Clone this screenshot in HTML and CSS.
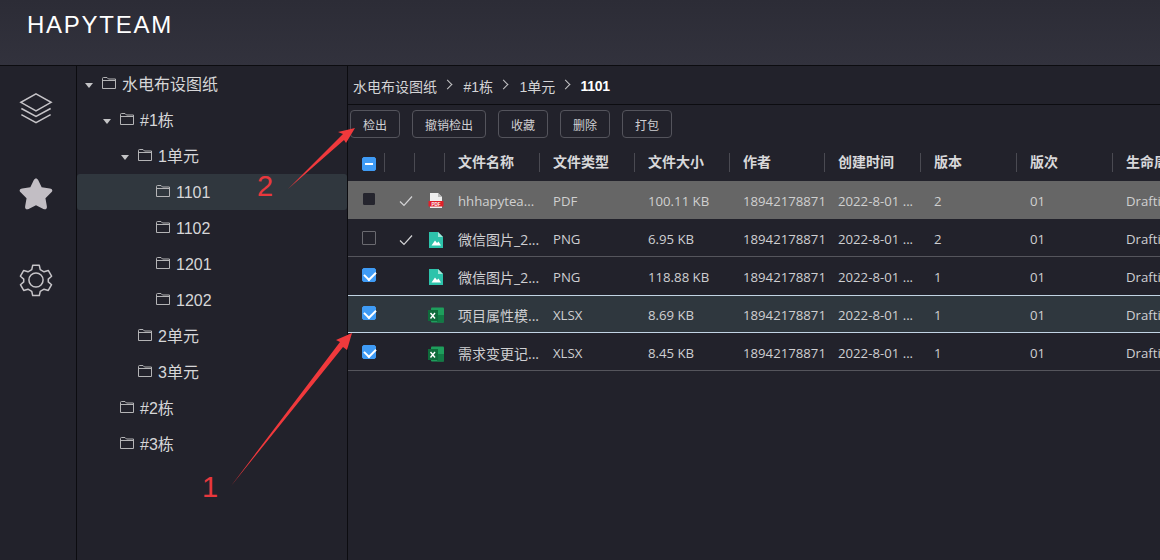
FILE: index.html
```html
<!DOCTYPE html>
<html lang="en">
<head>
  <title>HAPYTEAM</title>
  <meta charset="UTF-8">
  <link rel="stylesheet" href="styles.css">
</head>
<body>

  <header class="topbar">HAPYTEAM</header>

  <div class="layout">
    <nav class="rail">
      <svg class="rail-icon" width="34" height="34" viewBox="0 0 36 36">
        <path d="M18 3 L34 12 L18 21 L2 12 Z M2.500 18.500 L18 27 L33.500 18.500 M2.500 25 L18 33.500 L33.500 25" />
      </svg>
      <svg class="rail-icon rail-star" width="34" height="34" viewBox="0 0 36 36">
        <path d="M18 1.500 C19 1.500 19.800 2.200 20.300 3.300 L24 10.800 L32.700 12.100 C35.500 12.500 36 14.500 34.300 16.200 L28 22.400 L29.500 31 C30 33.800 28 35 25.800 33.800 L18 29.800 L10.200 33.800 C8 35 6 33.800 6.500 31 L8 22.400 L1.700 16.200 C0 14.500 0.500 12.500 3.300 12.100 L12 10.800 L15.700 3.300 C16.200 2.200 17 1.500 18 1.500 Z" />
      </svg>
      <svg class="rail-icon" width="34" height="34" viewBox="0 0 36 36">
        <circle cx="18" cy="18" r="7.500" />
        <path d="M14.500 2.500 H21.500 L22.500 7 L26.500 9.300 L31 7.900 L34.500 14 L31 17 V20 L34.500 23 L31 29.100 L26.500 27.700 L22.500 30 L21.500 34.500 H14.500 L13.500 30 L9.500 27.700 L5 29.100 L1.500 23 L5 20 V17 L1.500 14 L5 7.900 L9.500 9.300 L13.500 7 Z" stroke-linejoin="round" />
      </svg>
    </nav>

    <aside class="tree">
      <div class="node lv0"><i class="caret"></i><svg class="folder" viewBox="0 0 14 12"><path d="M.5 1.500 Q.5 .5 1.500 .5 H5 L6.500 2 H13.500 V11.500 H.5 Z M.5 3.500 H13.500" /></svg>水电布设图纸</div>
      <div class="node lv1"><i class="caret"></i><svg class="folder" viewBox="0 0 14 12"><path d="M.5 1.500 Q.5 .5 1.500 .5 H5 L6.500 2 H13.500 V11.500 H.5 Z M.5 3.500 H13.500" /></svg>#1栋</div>
      <div class="node lv2"><i class="caret"></i><svg class="folder" viewBox="0 0 14 12"><path d="M.5 1.500 Q.5 .5 1.500 .5 H5 L6.500 2 H13.500 V11.500 H.5 Z M.5 3.500 H13.500" /></svg>1单元</div>
      <div class="node lv3 active"><svg class="folder" viewBox="0 0 14 12"><path d="M.5 1.500 Q.5 .5 1.500 .5 H5 L6.500 2 H13.500 V11.500 H.5 Z M.5 3.500 H13.500" /></svg>1101</div>
      <div class="node lv3"><svg class="folder" viewBox="0 0 14 12"><path d="M.5 1.500 Q.5 .5 1.500 .5 H5 L6.500 2 H13.500 V11.500 H.5 Z M.5 3.500 H13.500" /></svg>1102</div>
      <div class="node lv3"><svg class="folder" viewBox="0 0 14 12"><path d="M.5 1.500 Q.5 .5 1.500 .5 H5 L6.500 2 H13.500 V11.500 H.5 Z M.5 3.500 H13.500" /></svg>1201</div>
      <div class="node lv3"><svg class="folder" viewBox="0 0 14 12"><path d="M.5 1.500 Q.5 .5 1.500 .5 H5 L6.500 2 H13.500 V11.500 H.5 Z M.5 3.500 H13.500" /></svg>1202</div>
      <div class="node lv2 leaf"><svg class="folder" viewBox="0 0 14 12"><path d="M.5 1.500 Q.5 .5 1.500 .5 H5 L6.500 2 H13.500 V11.500 H.5 Z M.5 3.500 H13.500" /></svg>2单元</div>
      <div class="node lv2 leaf"><svg class="folder" viewBox="0 0 14 12"><path d="M.5 1.500 Q.5 .5 1.500 .5 H5 L6.500 2 H13.500 V11.500 H.5 Z M.5 3.500 H13.500" /></svg>3单元</div>
      <div class="node lv1 leaf"><svg class="folder" viewBox="0 0 14 12"><path d="M.5 1.500 Q.5 .5 1.500 .5 H5 L6.500 2 H13.500 V11.500 H.5 Z M.5 3.500 H13.500" /></svg>#2栋</div>
      <div class="node lv1 leaf"><svg class="folder" viewBox="0 0 14 12"><path d="M.5 1.500 Q.5 .5 1.500 .5 H5 L6.500 2 H13.500 V11.500 H.5 Z M.5 3.500 H13.500" /></svg>#3栋</div>
    </aside>

    <main class="main">
      <div class="crumbs">
        <span>水电布设图纸</span><i class="sep"></i>
        <span>#1栋</span><i class="sep"></i>
        <span>1单元</span><i class="sep"></i>
        <span class="current">1101</span>
      </div>

      <div class="toolbar">
        <button>检出</button>
        <button>撤销检出</button>
        <button>收藏</button>
        <button>删除</button>
        <button>打包</button>
      </div>

      <table class="files">
        <colgroup>
          <col class="c-check"><col class="c-mark"><col class="c-mark">
          <col class="c-text"><col class="c-text"><col class="c-text"><col class="c-text">
          <col class="c-wide"><col class="c-wide"><col class="c-wide"><col class="c-wide">
        </colgroup>
        <thead>
          <tr>
            <th class="pick"><span class="box partial"></span></th>
            <th></th><th></th>
            <th>文件名称</th><th>文件类型</th><th>文件大小</th><th>作者</th>
            <th>创建时间</th><th>版本</th><th>版次</th><th>生命周期状态</th>
          </tr>
        </thead>
        <tbody>
          <tr class="hovered">
            <td class="pick"><span class="box solid"></span></td>
            <td class="mark"><svg class="tick" viewBox="0 0 14 12"><path d="M1 6.500 L5 10.500 L13 1.500" /></svg></td>
            <td class="mark"><svg class="ficon" viewBox="0 0 16 16"><path fill="#eee" d="M2 0 H10 L14 4 V15 H2 Z" /><path fill="#bbb" d="M10 0 L14 4 H10 Z" /><rect fill="#e0202a" x="0.500" y="8" width="15" height="5.500" /><text class="pdf-tag" x="8" y="12.500">PDF</text></svg></td>
            <td>hhhapytea...</td><td>PDF</td><td>100.11 KB</td><td>18942178871</td>
            <td>2022-8-01 ...</td><td>2</td><td>01</td><td>Drafting</td>
          </tr>
          <tr class="lined">
            <td class="pick"><span class="box"></span></td>
            <td class="mark"><svg class="tick" viewBox="0 0 14 12"><path d="M1 6.500 L5 10.500 L13 1.500" /></svg></td>
            <td class="mark"><svg class="ficon" viewBox="0 0 16 16"><path fill="#2dc3ab" d="M1 0 H10 L15 5 V16 H1 Z" /><path fill="#a5e8da" d="M10 0 L15 5 H10 Z" /><path fill="#fff" d="M3.500 13.500 L7 8.500 L9 11 L10.500 9.500 L13 13.500 Z" /></svg></td>
            <td class="zh">微信图片_2...</td><td>PNG</td><td>6.95 KB</td><td>18942178871</td>
            <td>2022-8-01 ...</td><td>2</td><td>01</td><td>Drafting</td>
          </tr>
          <tr>
            <td class="pick"><span class="box checked"></span></td>
            <td></td>
            <td class="mark"><svg class="ficon" viewBox="0 0 16 16"><path fill="#2dc3ab" d="M1 0 H10 L15 5 V16 H1 Z" /><path fill="#a5e8da" d="M10 0 L15 5 H10 Z" /><path fill="#fff" d="M3.500 13.500 L7 8.500 L9 11 L10.500 9.500 L13 13.500 Z" /></svg></td>
            <td class="zh">微信图片_2...</td><td>PNG</td><td>118.88 KB</td><td>18942178871</td>
            <td>2022-8-01 ...</td><td>1</td><td>01</td><td>Drafting</td>
          </tr>
          <tr class="selected">
            <td class="pick"><span class="box checked"></span></td>
            <td></td>
            <td class="mark"><svg class="ficon" viewBox="0 0 16 16"><rect fill="#1e9e5c" x="3" y="0.500" width="13" height="15" rx="1" /><rect fill="#127a45" x="9" y="8" width="7" height="7.500" /><rect fill="#0f6b3b" x="0" y="3" width="10" height="11" /><path stroke="#fff" stroke-width="1.400" fill="none" d="M2.500 6 L7 11.500 M7 6 L2.500 11.500" /></svg></td>
            <td class="zh">项目属性模...</td><td>XLSX</td><td>8.69 KB</td><td>18942178871</td>
            <td>2022-8-01 ...</td><td>1</td><td>01</td><td>Drafting</td>
          </tr>
          <tr class="lined">
            <td class="pick"><span class="box checked"></span></td>
            <td></td>
            <td class="mark"><svg class="ficon" viewBox="0 0 16 16"><rect fill="#1e9e5c" x="3" y="0.500" width="13" height="15" rx="1" /><rect fill="#127a45" x="9" y="8" width="7" height="7.500" /><rect fill="#0f6b3b" x="0" y="3" width="10" height="11" /><path stroke="#fff" stroke-width="1.400" fill="none" d="M2.500 6 L7 11.500 M7 6 L2.500 11.500" /></svg></td>
            <td class="zh">需求变更记...</td><td>XLSX</td><td>8.45 KB</td><td>18942178871</td>
            <td>2022-8-01 ...</td><td>1</td><td>01</td><td>Drafting</td>
          </tr>
        </tbody>
      </table>
    </main>
  </div>

  <!-- red notes drawn on top of the screenshot -->
  <svg class="arrows" width="1160" height="560" viewBox="0 0 1160 560">
    <path d="M288 189 L343 134 L338 132 L355 128 L346 143 L344 140 Z" />
    <path d="M231 486 L340 342 L336 340 L352 333 L347 350 L343 347 Z" />
  </svg>
  <span class="note note-one">1</span>
  <span class="note note-two">2</span>

</body>
</html>
```

FILE: styles.css
```css
* {
  box-sizing: border-box;
}

html, body {
  height: 100%;
}

body {
  margin: 0;
  overflow: hidden;
  background: #22222b;
  color: #d8d8da;
  font-family: 'Liberation Sans', 'Noto Sans CJK SC', sans-serif;
}

.topbar {
  height: 66px;
  padding: 10px 0 0 27px;
  background: linear-gradient(#2c2c36, #32323d);
  border-bottom: 1px solid #0c0c10;
  color: #fff;
  font-size: 24px;
  line-height: 30px;
  letter-spacing: 1.75px;
}

.layout {
  display: flex;
  height: 494px;
}

.rail {
  width: 77px;
  padding: 25px 5px 0 0;
  border-right: 1px solid #0c0c10;
  display: flex;
  flex-direction: column;
  align-items: center;
  gap: 52px;
}

.rail-icon {
  fill: none;
  stroke: #c6c4c8;
  stroke-width: 1.600;
}

.rail-star {
  fill: #c2bec4;
  stroke: none;
}

.tree {
  width: 271px;
  border-right: 1px solid #0c0c10;
  font-size: 16px;
}

.node {
  height: 36px;
  padding-bottom: 2px;
  display: flex;
  align-items: center;
  color: #d6d6d8;
}

.node.active {
  background: #30373e;
  border-radius: 3px;
}

.lv0 { padding-left: 8px; }
.lv1 { padding-left: 26px; }
.lv2 { padding-left: 44px; }
.lv1.leaf { padding-left: 43px; }
.lv2.leaf { padding-left: 61px; }

.lv3 {
  padding: 2px 0 0 79px;
}

.caret {
  width: 0;
  height: 0;
  margin: 4px 9px 0 0;
  border-left: 4px solid transparent;
  border-right: 4px solid transparent;
  border-top: 5px solid #c4c4c6;
}

.folder {
  width: 14px;
  height: 12px;
  margin-right: 6px;
  fill: none;
  stroke: #b4b4b6;
  stroke-width: 1;
}

.lv3 .folder {
  margin-top: -4px;
}

.main {
  flex: 1;
  min-width: 0;
  overflow: hidden;
}

.crumbs {
  height: 39px;
  padding: 1px 0 0 5px;
  border-bottom: 1px solid #0c0c10;
  display: flex;
  align-items: center;
  font-size: 14px;
  color: #d4d4d6;
}

.crumbs .current {
  margin-left: -1.500px;
  color: #fff;
  font-weight: bold;
  letter-spacing: -0.200px;
}

.sep {
  width: 7px;
  height: 7px;
  margin: -2px 12.500px 0 7px;
  border-top: 1px solid #c4c4c6;
  border-right: 1px solid #c4c4c6;
  transform: rotate(45deg);
}

.toolbar {
  height: 38px;
  padding: 5px 0 0 2px;
  display: flex;
  gap: 12px;
}

.toolbar button {
  height: 28px;
  padding: 0 12px;
  background: transparent;
  border: 1px solid #54545c;
  border-radius: 4px;
  color: #cfcfd2;
  font-family: inherit;
  font-size: 12px;
}

.files {
  table-layout: fixed;
  width: 861px;
  border-collapse: separate;
  border-spacing: 0;
  font-family: 'Open Sans', 'Noto Sans CJK SC', sans-serif;
  font-size: 13.200px;
}

.c-check { width: 37px; }
.c-mark { width: 30px; }
.c-text { width: 95px; }
.c-wide { width: 96px; }

.files th, .files td {
  height: 38px;
  padding: 0 0 0 13px;
  white-space: nowrap;
  text-align: left;
}

.files th {
  position: relative;
  padding-bottom: 2px;
  color: #d8d8da;
  font-family: 'Noto Sans CJK SC', sans-serif;
  font-size: 14px;
  font-weight: bold;
}

.files th::after {
  content: "";
  position: absolute;
  right: 0;
  top: 10px;
  height: 19px;
  width: 1px;
  background: #4a4a52;
}

.files td {
  padding-top: 1px;
  color: #cfcfd2;
}

.files .lined td {
  padding-top: 2px;
}

.files td.zh {
  font-size: 14px;
}

.files .pick {
  padding: 0 0 0 14px;
}

.files .mark {
  padding: 0 0 0 12px;
  text-align: center;
}

.files .mark svg {
  vertical-align: middle;
}

.hovered td {
  background: #666666;
  color: #d0d0d0;
}

.lined td {
  border-bottom: 1px solid #55555c;
}

.selected td {
  background: #2f373e;
  border-top: 1px solid #c2d4e4;
  border-bottom: 1px solid #c2d4e4;
}

.box {
  display: inline-block;
  position: relative;
  width: 14px;
  height: 14px;
  margin-top: -4px;
  vertical-align: middle;
  border: 1px solid #6a6a70;
  border-radius: 1px;
}

.box.solid {
  width: 12px;
  height: 12px;
  margin-left: 1px;
  background: #25252e;
  border-color: #25252e;
}

.box.checked, .box.partial {
  background: #3f9bf5;
  border-color: #3f9bf5;
  border-radius: 2px;
}

.box.checked::after {
  content: "";
  position: absolute;
  left: 3px;
  top: 0;
  width: 6px;
  height: 9px;
  border-right: 2px solid #fff;
  border-bottom: 2px solid #fff;
  transform: rotate(45deg);
}

.box.partial {
  margin-top: -1px;
}

.box.partial::after {
  content: "";
  position: absolute;
  left: 2px;
  top: 5px;
  width: 8px;
  height: 2px;
  background: #fff;
}

.tick {
  width: 14px;
  height: 12px;
  fill: none;
  stroke: #d4d4d6;
  stroke-width: 1.200;
}

.ficon {
  width: 16px;
  height: 16px;
}

.pdf-tag {
  fill: #fff;
  font-family: 'Liberation Sans', sans-serif;
  font-size: 4.500px;
  font-weight: bold;
  text-anchor: middle;
}

.arrows {
  position: absolute;
  left: 0;
  top: 0;
  fill: #f0393c;
}

.note {
  position: absolute;
  color: #e8383d;
  font-size: 29px;
  line-height: 32px;
}

.note-one {
  left: 202px;
  top: 471px;
}

.note-two {
  left: 257px;
  top: 170px;
}
```
